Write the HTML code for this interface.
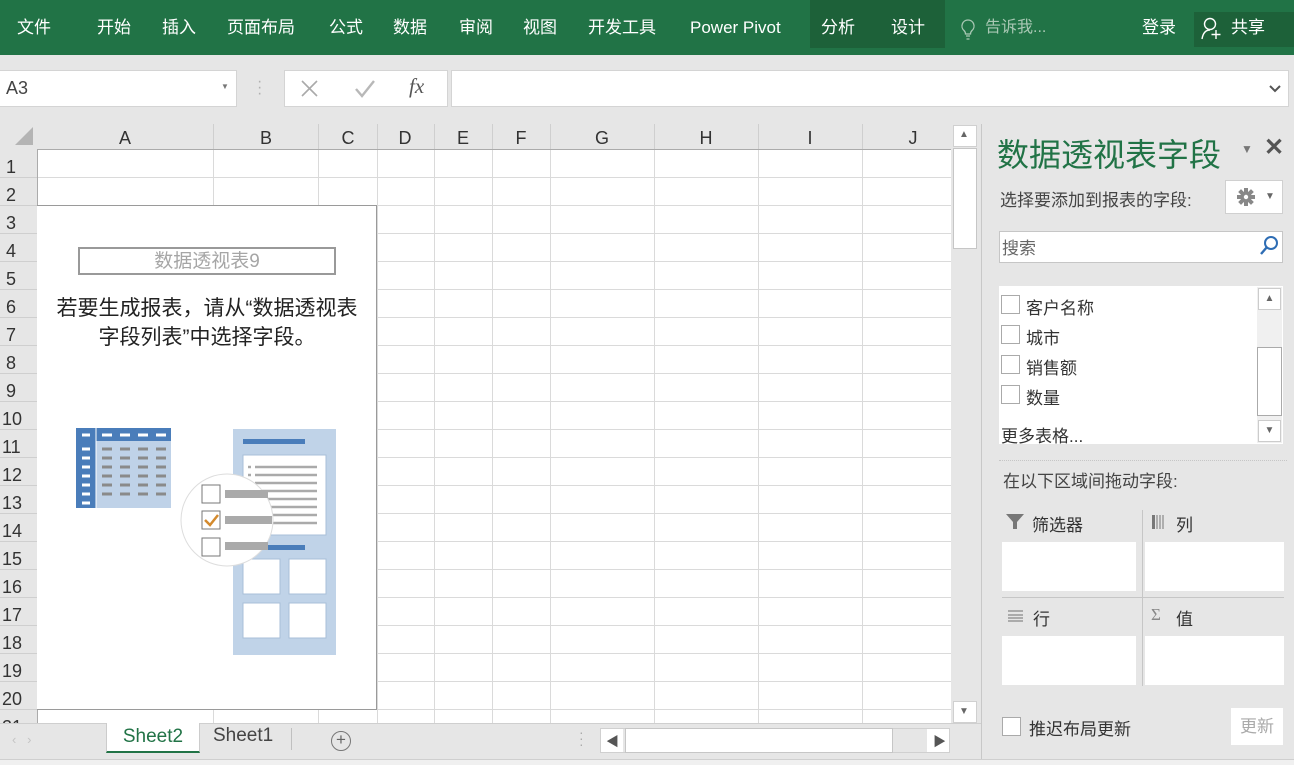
<!DOCTYPE html>
<html><head><meta charset="utf-8"><style>
*{margin:0;padding:0;box-sizing:border-box}
body{width:1294px;height:765px;overflow:hidden;background:#e6e6e6;font-family:"Liberation Sans","Noto Sans CJK SC",sans-serif;position:relative}
.a{position:absolute}
.tab{position:absolute;top:2px;height:52px;line-height:52px;color:#fff;font-size:17px}
.fl{position:absolute;left:1026px;font-size:17px;color:#333}
.cb{position:absolute;left:1001px;width:19px;height:19px;border:1px solid #aaa;background:#fff}
</style></head><body>
<div class="a" style="left:0;top:0;width:1294px;height:55px;background:#217346"></div>
<div class="a" style="left:810px;top:0;width:135px;height:48px;background:#1d6139"></div>
<div class="a" style="left:1194px;top:12px;width:100px;height:35px;background:#1d6139"></div>
<div class="tab" style="left:17px">文件</div>
<div class="tab" style="left:97px">开始</div>
<div class="tab" style="left:162px">插入</div>
<div class="tab" style="left:227px">页面布局</div>
<div class="tab" style="left:329px">公式</div>
<div class="tab" style="left:393px">数据</div>
<div class="tab" style="left:459px">审阅</div>
<div class="tab" style="left:523px">视图</div>
<div class="tab" style="left:588px">开发工具</div>
<div class="tab" style="left:690px">Power Pivot</div>
<div class="tab" style="left:821px">分析</div>
<div class="tab" style="left:891px">设计</div>
<div class="tab" style="left:985px;color:#a9c8b4;font-size:16px">告诉我...</div>
<svg class="a" style="left:960px;top:18px" width="16" height="24"><path d="M8 2a6 6 0 0 0-4 10.5c1 1 1.5 2 1.5 3.5h5c0-1.5.5-2.5 1.5-3.5A6 6 0 0 0 8 2zM6 18h4M6.5 21h3" stroke="#a9c8b4" stroke-width="1.3" fill="none"/></svg>
<div class="tab" style="left:1142px">登录</div>
<svg class="a" style="left:1200px;top:16px" width="26" height="26"><circle cx="10" cy="8" r="5.5" stroke="#fff" stroke-width="1.4" fill="none"/><path d="M2 23c1-6 4-9 8-9M16 14v9M11.5 18.5h9" stroke="#fff" stroke-width="1.4" fill="none"/></svg>
<div class="tab" style="left:1231px">共享</div>

<!-- formula bar -->
<div class="a" style="left:0;top:70px;width:237px;height:37px;background:#fff;border:1px solid #d4d4d4;border-left:0"></div>
<div class="a" style="left:6px;top:78px;font-size:18px;color:#444">A3</div>
<div class="a" style="left:221px;top:82px;font-size:8px;color:#777">▼</div>
<div class="a" style="left:257px;top:79px;font-size:16px;color:#b0b0b0;line-height:6px">·<br>·<br>·</div>
<div class="a" style="left:284px;top:70px;width:164px;height:37px;background:#fff;border:1px solid #d4d4d4"></div>
<svg class="a" style="left:300px;top:80px" width="20" height="18"><path d="M2 1l15 15M17 1L2 16" stroke="#aaa" stroke-width="1.6"/></svg>
<svg class="a" style="left:354px;top:80px" width="22" height="18"><path d="M2 9l6 7L20 1" stroke="#b8b8b8" stroke-width="2.4" fill="none"/></svg>
<div class="a" style="left:409px;top:74px;font-size:21px;font-style:italic;font-family:'Liberation Serif',serif;color:#555">fx</div>
<div class="a" style="left:451px;top:70px;width:838px;height:37px;background:#fff;border:1px solid #d4d4d4"></div>
<svg class="a" style="left:1269px;top:84px" width="12" height="10"><path d="M1 2l5 5 5-5" stroke="#555" stroke-width="2" fill="none"/></svg>

<!-- grid -->
<svg class="a" style="left:0;top:124px" width="951" height="600">
<rect x="0" y="0" width="951" height="600" fill="#fff"/>
<rect x="0" y="0" width="951" height="25" fill="#e6e6e6"/>
<rect x="0" y="0" width="37" height="600" fill="#e6e6e6"/>
<path d="M33 3L33 21 15 21Z" fill="#b4b4b4"/>
<g stroke="#dadada" stroke-width="1">
<path d="M213.5 25V600M318.5 25V600M377.5 25V600M434.5 25V600M492.5 25V600M550.5 25V600M654.5 25V600M758.5 25V600M862.5 25V600"/>
<path d="M37 53.5H951M37 81.5H951M37 109.5H951M37 137.5H951M37 165.5H951M37 193.5H951M37 221.5H951M37 249.5H951M37 277.5H951M37 305.5H951M37 333.5H951M37 361.5H951M37 389.5H951M37 417.5H951M37 445.5H951M37 473.5H951M37 501.5H951M37 529.5H951M37 557.5H951M37 585.5H951"/>
</g>
<g stroke="#cfcfcf"><path d="M213.5 0V25M318.5 0V25M377.5 0V25M434.5 0V25M492.5 0V25M550.5 0V25M654.5 0V25M758.5 0V25M862.5 0V25"/>
<path d="M0 53.5H37M0 81.5H37M0 109.5H37M0 137.5H37M0 165.5H37M0 193.5H37M0 221.5H37M0 249.5H37M0 277.5H37M0 305.5H37M0 333.5H37M0 361.5H37M0 389.5H37M0 417.5H37M0 445.5H37M0 473.5H37M0 501.5H37M0 529.5H37M0 557.5H37M0 585.5H37"/></g>
<path d="M37 25.5H951M37.5 25V600" stroke="#ababab"/>
<g font-family="Liberation Sans" font-size="18" fill="#333" text-anchor="middle">
<text x="125" y="20">A</text><text x="266" y="20">B</text><text x="348" y="20">C</text><text x="405" y="20">D</text><text x="463" y="20">E</text><text x="521" y="20">F</text><text x="602" y="20">G</text><text x="706" y="20">H</text><text x="810" y="20">I</text><text x="913" y="20">J</text>
</g>
<g font-family="Liberation Sans" font-size="18" fill="#333">
<text x="6" y="49">1</text><text x="6" y="77">2</text><text x="6" y="105">3</text><text x="6" y="133">4</text><text x="6" y="161">5</text><text x="6" y="189">6</text><text x="6" y="217">7</text><text x="6" y="245">8</text><text x="6" y="273">9</text><text x="2" y="301">10</text><text x="2" y="329">11</text><text x="2" y="357">12</text><text x="2" y="385">13</text><text x="2" y="413">14</text><text x="2" y="441">15</text><text x="2" y="469">16</text><text x="2" y="497">17</text><text x="2" y="525">18</text><text x="2" y="553">19</text><text x="2" y="581">20</text><text x="2" y="609">21</text>
</g>
</svg>

<!-- pivot placeholder -->
<div class="a" style="left:37px;top:205px;width:340px;height:505px;background:#fff;border:1px solid #9a9a9a;border-left:0"></div>
<div class="a" style="left:78px;top:247px;width:258px;height:28px;border:2px solid #999;text-align:center;font-size:19px;line-height:26px;color:#a6a6a6">数据透视表9</div>
<div class="a" style="left:30px;top:294px;width:354px;text-align:center;font-size:21px;line-height:29px;color:#222">若要生成报表，请从“数据透视表<br>字段列表”中选择字段。</div>
<svg class="a" style="left:70px;top:420px" width="280" height="245">
<rect x="6" y="8" width="95" height="80" fill="#bfd2e8"/>
<rect x="6" y="8" width="95" height="13" fill="#4a7dba"/>
<rect x="6" y="8" width="20" height="80" fill="#4a7dba"/>
<path d="M26 8v80" stroke="#fff"/>
<g stroke="#fff" stroke-width="3"><path d="M12 15h8M32 15h10M50 15h10M68 15h10M86 15h10M12 29h8M12 38h8M12 47h8M12 56h8M12 65h8M12 74h8M12 83h8"/></g>
<g stroke="#8a8a8a" stroke-width="3"><path d="M32 29h10M50 29h10M68 29h10M86 29h10M32 38h10M50 38h10M68 38h10M86 38h10M32 47h10M50 47h10M68 47h10M86 47h10M32 56h10M50 56h10M68 56h10M86 56h10M32 65h10M50 65h10M68 65h10M86 65h10M32 74h10M50 74h10M68 74h10M86 74h10"/></g>
<rect x="163" y="9" width="103" height="226" fill="#c0d3e8"/>
<rect x="173" y="19" width="62" height="5" fill="#4a7dba"/>
<rect x="173" y="35" width="83" height="80" fill="#fff" stroke="#a9bfd8"/>
<g stroke="#aaa" stroke-width="2.5"><path d="M185 47h62M185 55h62M185 63h62M185 71h62M185 79h62M185 87h62M185 95h62M185 103h62"/></g>
<path d="M178 47h3M178 55h3" stroke="#aaa" stroke-width="2.5"/>
<rect x="173" y="125" width="62" height="5" fill="#4a7dba"/>
<g fill="#fff" stroke="#a9bfd8"><rect x="173" y="139" width="37" height="35"/><rect x="219" y="139" width="37" height="35"/><rect x="173" y="183" width="37" height="35"/><rect x="219" y="183" width="37" height="35"/></g>
<circle cx="157" cy="100" r="46" fill="#fff" stroke="#ddd"/>
<g fill="#fff" stroke="#777"><rect x="132" y="65" width="18" height="18"/><rect x="132" y="91" width="18" height="18"/><rect x="132" y="118" width="18" height="18"/></g>
<path d="M135 100l5 5 8-10" stroke="#d38a2e" stroke-width="2.5" fill="none"/>
<g stroke="#aaa" stroke-width="8"><path d="M155 74h43M155 100h47M155 126h43"/></g>
</svg>

<!-- vertical scrollbar -->
<div class="a" style="left:952px;top:124px;width:26px;height:600px;background:#e6e6e6"></div>
<div class="a" style="left:953px;top:125px;width:24px;height:22px;background:#fff;border:1px solid #d0d0d0"></div>
<div class="a" style="left:959px;top:129px;font-size:10px;color:#666">▲</div>
<div class="a" style="left:953px;top:148px;width:24px;height:101px;background:#fff;border:1px solid #c6c6c6"></div>
<div class="a" style="left:953px;top:701px;width:24px;height:22px;background:#fff;border:1px solid #d0d0d0"></div>
<div class="a" style="left:959px;top:706px;font-size:10px;color:#666">▼</div>

<!-- sheet tabs -->
<div class="a" style="left:0;top:723px;width:982px;height:36px;background:#e6e6e6;border-top:1px solid #cfcfcf"></div>
<div class="a" style="left:12px;top:732px;font-size:13px;color:#c4c4c4">‹ &nbsp; ›</div>
<div class="a" style="left:106px;top:723px;width:94px;height:30px;background:#fff;border-bottom:2px solid #217346;border-left:1px solid #ccc;border-right:1px solid #ccc;text-align:center;font-size:19px;line-height:28px;color:#217346">Sheet2</div>
<div class="a" style="left:213px;top:725px;font-size:19px;color:#444">Sheet1</div>
<div class="a" style="left:291px;top:728px;width:1px;height:22px;background:#c0c0c0"></div>
<div class="a" style="left:331px;top:731px;width:20px;height:20px;border:1.5px solid #777;border-radius:50%;text-align:center;font-size:17px;line-height:16px;color:#666">+</div>
<div class="a" style="left:579px;top:729px;font-size:14px;color:#aaa;line-height:6px">·<br>·<br>·</div>
<div class="a" style="left:600px;top:728px;width:350px;height:25px;background:#e6e6e6;border:1px solid #d0d0d0"></div>
<div class="a" style="left:601px;top:729px;width:22px;height:23px;background:#fff"></div>
<div class="a" style="left:606px;top:731px;font-size:13px;color:#555">◀</div>
<div class="a" style="left:625px;top:728px;width:268px;height:25px;background:#fff;border:1px solid #c6c6c6"></div>
<div class="a" style="left:927px;top:729px;width:22px;height:23px;background:#fff"></div>
<div class="a" style="left:933px;top:731px;font-size:13px;color:#555">▶</div>
<div class="a" style="left:0;top:759px;width:1294px;height:6px;background:#f0f0f0;border-top:1px solid #cfcfcf"></div>

<!-- right panel -->
<div class="a" style="left:981px;top:124px;width:1px;height:635px;background:#c8c8c8"></div>
<div class="a" style="left:997px;top:130px;font-size:32px;color:#217346;white-space:nowrap">数据透视表字段</div>
<div class="a" style="left:1241px;top:142px;font-size:12px;color:#777">▼</div>
<div class="a" style="left:1264px;top:133px;font-size:24px;color:#555;font-weight:bold">✕</div>
<div class="a" style="left:1000px;top:186px;font-size:17px;color:#444">选择要添加到报表的字段:</div>
<div class="a" style="left:1225px;top:180px;width:58px;height:34px;background:#fff;border:1px solid #d0d0d0"></div>
<svg class="a" style="left:1236px;top:187px" width="20" height="20"><g stroke="#888" stroke-width="4"><path d="M10 1v18M1 10h18M3.6 3.6l12.8 12.8M16.4 3.6L3.6 16.4"/></g><circle cx="10" cy="10" r="5.5" fill="#888"/><circle cx="10" cy="10" r="2.2" fill="#fff"/></svg>
<div class="a" style="left:1265px;top:191px;font-size:10px;color:#666">▼</div>
<div class="a" style="left:999px;top:231px;width:284px;height:32px;background:#fff;border:1px solid #c6c6c6"></div>
<div class="a" style="left:1002px;top:234px;font-size:17px;color:#666">搜索</div>
<svg class="a" style="left:1258px;top:235px" width="22" height="22"><circle cx="13" cy="8" r="6" stroke="#2e6db4" stroke-width="2" fill="none"/><path d="M9 12l-6 7" stroke="#2e6db4" stroke-width="2.4"/></svg>
<div class="a" style="left:999px;top:286px;width:284px;height:158px;background:#fff"></div>
<div class="a" style="left:1257px;top:287px;width:25px;height:156px;background:#f0f0f0"></div>
<div class="a" style="left:1258px;top:288px;width:23px;height:22px;background:#fff;border:1px solid #ccc;text-align:center;font-size:10px;color:#666;line-height:20px">▲</div>
<div class="a" style="left:1257px;top:347px;width:25px;height:69px;background:#fff;border:1px solid #aaa"></div>
<div class="a" style="left:1258px;top:420px;width:23px;height:22px;background:#fff;border:1px solid #ccc;text-align:center;font-size:10px;color:#666;line-height:20px">▼</div>
<div class="cb" style="top:295px"></div>
<div class="cb" style="top:325px"></div>
<div class="cb" style="top:355px"></div>
<div class="cb" style="top:385px"></div>
<div class="fl" style="top:294px">客户名称</div>
<div class="fl" style="top:324px">城市</div>
<div class="fl" style="top:354px">销售额</div>
<div class="fl" style="top:384px">数量</div>
<div class="a" style="left:1001px;top:422px;font-size:17px;color:#333">更多表格...</div>
<div class="a" style="left:999px;top:460px;width:288px;border-top:1px dotted #c6c6c6"></div>
<div class="a" style="left:1003px;top:467px;font-size:17px;color:#444">在以下区域间拖动字段:</div>
<div class="a" style="left:1142px;top:510px;width:1px;height:176px;background:#c6c6c6"></div>
<div class="a" style="left:1002px;top:597px;width:282px;height:1px;background:#c6c6c6"></div>
<svg class="a" style="left:1006px;top:514px" width="18" height="16"><path d="M0 0h18L11 8v7H7V8z" fill="#777"/></svg>
<div class="a" style="left:1032px;top:511px;font-size:17px;color:#333">筛选器</div>
<svg class="a" style="left:1152px;top:515px" width="14" height="14"><path d="M5 0v14M8 0v14M11 0v14" stroke="#888" stroke-width="1.2"/><rect x="0" y="0" width="3" height="14" fill="#777"/></svg>
<div class="a" style="left:1176px;top:511px;font-size:17px;color:#333">列</div>
<svg class="a" style="left:1008px;top:610px" width="16" height="12"><path d="M0 1h15M0 5h15M0 8h15M0 11h15" stroke="#888" stroke-width="1.3"/></svg>
<div class="a" style="left:1033px;top:605px;font-size:17px;color:#333">行</div>
<div class="a" style="left:1151px;top:605px;font-size:17px;color:#888;font-family:'Liberation Serif',serif">Σ</div>
<div class="a" style="left:1176px;top:605px;font-size:17px;color:#333">值</div>
<div class="a" style="left:1002px;top:542px;width:134px;height:49px;background:#fff"></div>
<div class="a" style="left:1145px;top:542px;width:139px;height:49px;background:#fff"></div>
<div class="a" style="left:1002px;top:636px;width:134px;height:49px;background:#fff"></div>
<div class="a" style="left:1145px;top:636px;width:139px;height:49px;background:#fff"></div>
<div class="a" style="left:1002px;top:717px;width:19px;height:19px;border:1px solid #aaa;background:#fff"></div>
<div class="a" style="left:1029px;top:715px;font-size:17px;color:#333">推迟布局更新</div>
<div class="a" style="left:1231px;top:708px;width:52px;height:37px;background:#fff;text-align:center;font-size:17px;line-height:37px;color:#aaa">更新</div>
</body></html>
